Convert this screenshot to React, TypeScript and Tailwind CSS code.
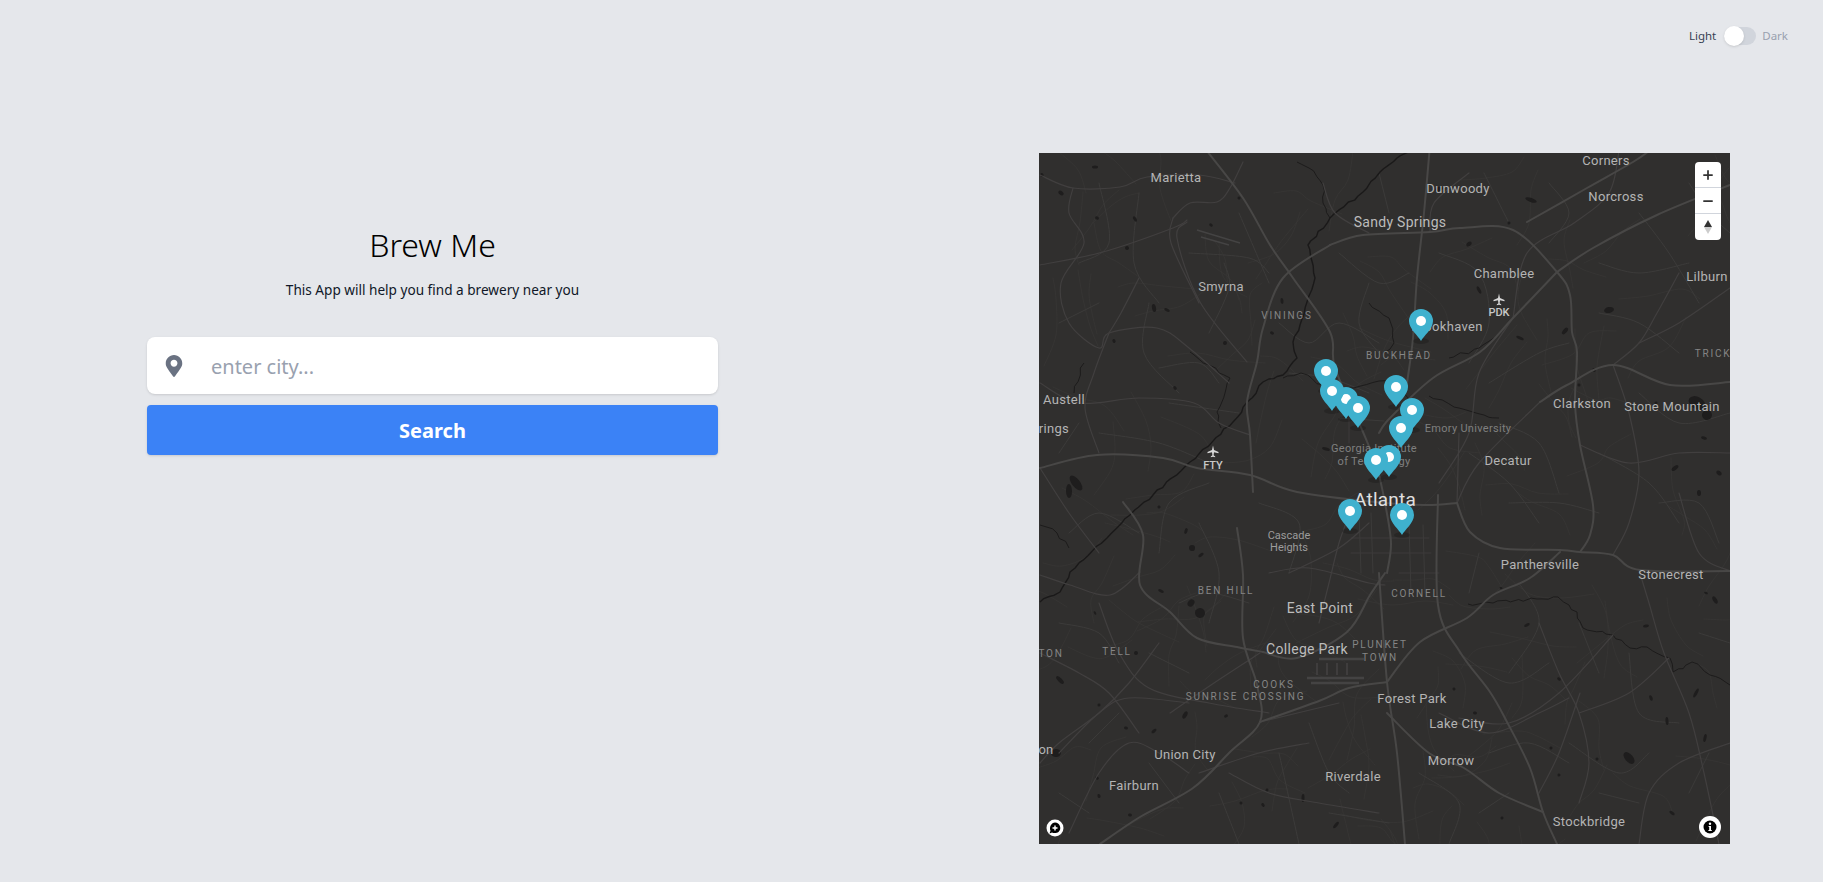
import { Minus, Plus } from "lucide-react";
import { FaMapMarkerAlt } from "react-icons/fa";

// map labels: [text, center x, center y, kind]
const labels: Array<[string, number, number, string]> = [
  ["Marietta", 137, 24, "city"],
  ["Sandy Springs", 361, 69, "big"],
  ["Smyrna", 182, 133, "city"],
  ["VININGS", 248, 163, "area"],
  ["Austell", 25, 246, "city"],
  ["rings", 15, 275, "city"],
  ["FTY", 174, 312, "air"],
  ["Corners", 567, 7, "city"],
  ["Dunwoody", 419, 35, "city"],
  ["Norcross", 577, 43, "city"],
  ["Chamblee", 465, 120, "city"],
  ["Lilburn", 668, 123, "city"],
  ["PDK", 460, 159, "air"],
  ["Brookhaven", 408, 173, "city"],
  ["BUCKHEAD", 360, 203, "area"],
  ["TRICK", 674, 201, "area"],
  ["Clarkston", 543, 250, "city"],
  ["Stone Mountain", 633, 253, "city"],
  ["Emory University", 429, 275, "poi"],
  ["Decatur", 469, 307, "city"],
  ["Georgia Institute", 335, 295, "poi"],
  ["of Technology", 335, 308, "poi"],
  ["Atlanta", 346, 346, "capital"],
  ["Cascade", 250, 382, "small"],
  ["Heights", 250, 394, "small"],
  ["Panthersville", 501, 411, "city"],
  ["Stonecrest", 632, 421, "city"],
  ["BEN HILL", 187, 438, "area"],
  ["CORNELL", 380, 441, "area"],
  ["East Point", 281, 455, "big"],
  ["College Park", 268, 496, "big"],
  ["PLUNKET", 341, 492, "area"],
  ["TOWN", 341, 505, "area"],
  ["TELL", 78, 499, "area"],
  ["TON", 12, 501, "area"],
  ["COOKS", 235, 532, "area"],
  ["SUNRISE", 173, 544, "area"],
  ["CROSSING", 235, 544, "area"],
  ["Forest Park", 373, 545, "city"],
  ["Lake City", 418, 570, "city"],
  ["Union City", 146, 601, "city"],
  ["on", 7, 596, "city"],
  ["Morrow", 412, 607, "city"],
  ["Riverdale", 314, 623, "city"],
  ["Fairburn", 95, 632, "city"],
  ["Stockbridge", 550, 668, "city"],
];

const labelClass: Record<string, string> = {
  city: "text-[13px] text-[#b4b4b4] tracking-[0.3px]",
  big: "text-[14px] text-[#bcbcbc] tracking-[0.3px]",
  capital: "text-[19px] text-[#e0e0e0] tracking-[0.2px]",
  area: "text-[10px] text-[#858585] tracking-[1.8px]",
  poi: "text-[11px] text-[#7f7f7f] tracking-[0.3px]",
  small: "text-[11px] text-[#9c9c9c]",
  air: "text-[11px] text-[#c8c8c8] font-medium",
};

// dot centres of the markers, back to front
const pins = [
  [382, 168],
  [287, 218],
  [307, 246],
  [293, 238],
  [319, 255],
  [357, 234],
  [373, 257],
  [362, 275],
  [350, 304],
  [337, 307],
  [311, 358],
  [363, 362],
];

const highways = [
  "M168 -2L204 45L231 92L254 125L291 179L296 215L324 279L338 315L346 350L352 390L348 420",
  "M291 92L244 125L224 175L218 209L208 249L211 282L214 339",
  "M1 315L58 302L124 305L158 315L211 322L258 339L346 350L388 352L418 350",
  "M418 350L431 379L461 395L521 397L541 399L574 402L601 417L691 418",
  "M291 92L324 82L391 79L421 75L474 77L518 119L531 142L533 179L538 199L536 250L541 292L554 352L551 382L541 399",
  "M518 119L474 165L441 199L394 225L351 265L340 280",
  "M518 119L554 95L618 62L691 32",
  "M488 69L548 35L594 9L610 -2",
  "M391 -8L385 60L378 125L374 185L368 230",
  "M501 249L528 232L574 212L631 232L691 229",
  "M348 529L381 489L428 465L454 442L491 425L521 399",
  "M399 342L399 452L421 499L451 539L468 569L491 615L504 659L518 691",
  "M198 375L204 422L204 485L218 532L221 569L191 599L154 635L101 664L61 691",
  "M340 420L348 529L358 600L366 691",
  "M224 499L258 505L308 479L331 442L346 420",
  "M348 529L310 535L280 548L221 569",
  "M84 349L104 382L101 432L131 459L158 485L198 494L224 499",
  "M504 659L460 640L425 615L390 600L348 560",
];

const mainRoads = [
  "M1 22L34 35L81 34L108 24L160 22L196 30",
  "M134 65L151 50L178 49L191 35L204 9",
  "M1 112L64 99L134 75L148 67",
  "M148 69L138 85L161 149L208 209",
  "M134 65L132 90L160 150",
  "M34 35L30 60L45 90L22 130L30 170L60 195L70 180L118 175L150 195L190 230",
  "M70 180L55 220L46 255L60 300",
  "M100 125L82 160L70 180",
  "M1 230L40 250L100 245L155 250L180 270L211 282",
  "M1 422L31 432L71 442L101 419",
  "M1 315L30 360L60 400",
  "M60 450L80 500L110 535L170 550L230 560",
  "M120 490L90 530L60 560L20 590L1 610",
  "M131 560L175 530L221 500",
  "M160 620L220 600L270 590",
  "M284 30L296 60L330 80",
  "M430 20L395 50L391 79",
  "M580 -2L570 40L535 70L488 100L474 165",
  "M640 120L618 160L600 190L574 212",
  "M691 135L640 170L600 190",
  "M474 165L440 220L430 280L400 330",
  "M501 249L440 310L418 350",
  "M574 212L590 260L600 320L590 370L574 402",
  "M691 300L640 300L590 310L541 292",
  "M600 417L610 450L625 500L650 560L665 620L680 691",
  "M574 482L520 540L470 570L420 565",
  "M640 340L660 400L691 418",
  "M540 560L590 540L630 505",
  "M500 470L520 520L540 560L550 610L540 650",
  "M541 540L520 600L500 640",
  "M418 350L420 280",
  "M600 691L610 640L640 610L691 590",
  "M400 560L450 580L500 560L530 545",
  "M280 470L290 430L300 390L311 360",
  "M250 420L300 395L330 370",
  "M230 420L270 415L330 430L346 432",
  "M30 680L60 620L90 590L120 600L150 620",
  "M190 620L230 640L280 650L340 660",
  "M221 569L300 550",
  "M1 500L40 520L70 540L100 580",
  "M20 600L60 560L90 545L150 550",
];

const minorRoads = [
  "M60 30L70 90L40 110",
  "M100 40L95 110L120 150",
  "M200 60L230 130",
  "M150 100L210 105L230 120",
  "M185 110L190 135L170 180",
  "M110 150L105 200L140 240",
  "M120 215L160 210L180 230",
  "M20 170L60 150",
  "M130 250L200 260",
  "M60 280L120 290L170 310",
  "M20 300L40 270",
  "M240 170L270 190L300 170L340 190",
  "M250 220L290 225L330 240",
  "M300 100L340 130L370 120",
  "M340 20L350 60",
  "M330 130L320 170L340 200",
  "M400 100L440 120L450 170L430 210",
  "M445 20L470 70",
  "M510 30L530 60L510 90",
  "M560 110L600 120L650 110",
  "M600 60L630 100L660 150",
  "M560 160L600 170L640 200",
  "M450 230L500 200L530 190",
  "M460 270L500 290L520 340",
  "M600 240L640 270L691 260",
  "M650 30L670 60L691 80",
  "M430 300L470 330L500 370",
  "M560 300L610 330L640 370",
  "M620 350L660 350L680 390",
  "M470 350L520 350L560 360",
  "M440 400L430 440",
  "M480 430L500 470L470 520",
  "M540 470L560 520",
  "M590 500L600 560L640 570",
  "M660 480L691 490",
  "M420 500L470 530L510 510",
  "M530 590L580 620L610 600",
  "M450 600L490 590L530 610",
  "M560 640L600 650",
  "M650 640L670 600",
  "M120 400L130 350L170 330",
  "M30 380L60 360L100 380",
  "M160 370L180 420L170 470",
  "M220 350L260 370L250 420",
  "M140 450L170 440L210 450",
  "M20 470L60 480L80 510",
  "M50 590L80 560",
  "M110 500L150 520",
  "M110 610L140 650",
  "M180 640L200 691",
  "M240 600L260 691",
  "M270 570L290 620L310 640",
  "M290 660L350 670",
  "M20 640L50 660",
  "M380 620L420 650L410 691",
  "M440 660L470 640",
];

// downtown street grid stays straight
const grid = "M320 360L322 420M332 360L334 420M312 385L390 385M312 400L392 400M370 370L372 440M384 372L386 440M360 420L400 420M300 265L345 268M310 250L310 290";

const river = "M1 449L21 439L31 419L68 385L91 362L114 342L151 309L194 269L224 229L244 222L258 205L254 189L261 172L268 149L276 125L269 92L291 65L324 39L341 19L358 5L372 -2";

const creeks = [
  "M151 199L170 212L191 225L186 240L178 259L182 275",
  "M258 9L270 15L284 32L284 50L291 65",
  "M244 225L262 220L285 232L310 235L340 228L352 225L372 248",
  "M390 243L420 255L445 262L460 265",
  "M330 150L350 165L355 190L345 200",
  "M410 205L440 195L455 185",
  "M429 451L454 450L498 446L519 444L530 452L538 459L544 475L574 482L591 495L608 494L631 505L634 519L653 509L671 522L691 532",
  "M1 372L18 380L30 395",
  "M45 210L35 240",
];

const ponds = [
  [56, 14, 3, 1.5], [22, 40, 3, 2], [3, 22, 2, 1.5], [58, 65, 2, 1.5], [96, 66, 3, 1.5], [88, 95, 2, 2],
  [172, 72, 2, 1.5], [115, 155, 4, 2], [128, 157, 3, 1.5], [75, 188, 2, 1.5], [186, 190, 2, 2], [136, 235, 2, 1.5],
  [243, 148, 3, 1.5], [233, 180, 2, 1.5], [320, 270, 3, 2], [287, 296, 4, 1.5], [37, 330, 9, 4], [30, 338, 7, 3],
  [200, 45, 1.5, 1.5], [400, 36, 2, 4], [492, 47, 6, 2], [430, 91, 2, 3], [470, 70, 1.5, 1.5], [526, 178, 2, 4],
  [570, 157, 3, 5], [481, 185, 4, 1.5], [440, 137, 4, 1.5], [540, 232, 1.5, 1.5], [555, 217, 2, 1.5], [617, 250, 1.5, 1.5],
  [658, 250, 9, 6], [668, 262, 5, 5], [665, 285, 3, 1.5], [636, 315, 2, 4], [660, 340, 3, 2], [680, 320, 3, 2],
  [120, 354, 1.5, 1.5], [147, 378, 1.5, 3], [162, 402, 1.5, 3], [153, 395, 3, 3], [152, 450, 3, 4], [161, 460, 5, 5],
  [122, 438, 3, 1.5], [56, 460, 2, 1], [97, 500, 2, 2], [21, 527, 5, 2], [60, 552, 1.5, 1.5], [146, 562, 2, 4],
  [187, 563, 1.5, 2], [87, 575, 2, 1.5], [115, 578, 1.5, 3], [17, 600, 4, 5], [58, 625, 2, 1.5], [60, 643, 2, 1.5],
  [91, 662, 2, 1.5], [224, 652, 2, 1.5], [264, 645, 1.5, 4], [297, 672, 1.5, 4], [202, 650, 1.5, 1.5], [228, 637, 1.5, 1.5],
  [488, 472, 1.5, 3], [462, 435, 1.5, 1], [520, 526, 2, 1.5], [607, 473, 1.5, 3], [657, 540, 1.5, 5], [612, 545, 3, 1.5],
  [666, 585, 1.5, 4], [590, 605, 7, 4], [628, 568, 4, 1.5], [633, 660, 3, 1.5], [415, 536, 1.5, 1.5], [436, 560, 2, 1.5],
  [512, 595, 1.5, 1.5], [520, 622, 1.5, 1.5], [558, 606, 1.5, 1.5], [463, 665, 1.5, 1.5], [667, 440, 2, 1], [676, 447, 4, 2],
];

function points(d: string) {
  return d
    .replace("M", "")
    .split("L")
    .map((p) => p.trim().split(" ").map(Number));
}

// polyline -> catmull-rom curve, so the roads bend instead of kinking
function smooth(d: string) {
  const p = points(d);
  let out = `M${p[0][0]} ${p[0][1]}`;
  for (let i = 0; i < p.length - 1; i++) {
    const a = p[i - 1] || p[i];
    const b = p[i];
    const c = p[i + 1];
    const e = p[i + 2] || c;
    out += `C${b[0] + (c[0] - a[0]) / 6} ${b[1] + (c[1] - a[1]) / 6} ${c[0] - (e[0] - b[0]) / 6} ${c[1] - (e[1] - b[1]) / 6} ${c[0]} ${c[1]}`;
  }
  return out;
}

function rng(seed: number) {
  let s = seed;
  return () => {
    s = (s * 16807) % 2147483647;
    return s / 2147483647;
  };
}

// creeks and rivers are jagged: cut each leg up and shake the points
function wiggle(d: string, seed: number, amount: number) {
  const r = rng(seed);
  const p = points(d);
  let out = `M${p[0][0]} ${p[0][1]}`;
  for (let i = 0; i < p.length - 1; i++) {
    const steps = Math.max(2, Math.round(Math.hypot(p[i + 1][0] - p[i][0], p[i + 1][1] - p[i][1]) / 6));
    for (let k = 1; k <= steps; k++) {
      const t = k / steps;
      const shake = k === steps ? 0 : amount;
      const x = p[i][0] + (p[i + 1][0] - p[i][0]) * t + (r() - 0.5) * shake;
      const y = p[i][1] + (p[i + 1][1] - p[i][1]) * t + (r() - 0.5) * shake;
      out += `L${x.toFixed(1)} ${y.toFixed(1)}`;
    }
  }
  return out;
}

// faint neighbourhood streets that fill the gaps
function backgroundStreets() {
  const r = rng(4242);
  const out: string[] = [];
  for (let i = 0; i < 170; i++) {
    let x = r() * 691;
    let y = r() * 691;
    let angle = r() * Math.PI * 2;
    let d = `M${x.toFixed(0)} ${y.toFixed(0)}`;
    for (let k = 0; k < 3; k++) {
      angle += (r() - 0.5) * 1.2;
      x += Math.cos(angle) * (14 + r() * 22);
      y += Math.sin(angle) * (14 + r() * 22);
      d += `L${x.toFixed(0)} ${y.toFixed(0)}`;
    }
    out.push(d);
  }
  return out;
}

const streets = backgroundStreets();

function MapDrawing() {
  return (
    <svg viewBox="0 0 691 691" className="block w-full h-full" fill="none">
      <g stroke="#373635" strokeWidth="0.8" strokeLinecap="round" strokeLinejoin="round">
        {streets.map((d, i) => (
          <path key={i} d={smooth(d)} />
        ))}
      </g>
      <g stroke="#3c3b3a" strokeWidth="1" strokeLinecap="round" strokeLinejoin="round">
        {minorRoads.map((d, i) => (
          <path key={i} d={smooth(d)} />
        ))}
        <path d={grid} />
      </g>
      <g fill="#1e1d1d">
        {ponds.map(([x, y, rx, ry], i) => (
          <ellipse key={i} cx={x} cy={y} rx={rx} ry={ry} transform={`rotate(${(i * 37) % 90} ${x} ${y})`} />
        ))}
      </g>
      <g stroke="#1a1919" strokeLinejoin="round">
        <path strokeWidth="1.4" d={wiggle(river, 77, 2.5)} />
        {creeks.map((d, i) => (
          <path key={i} d={wiggle(d, 100 + i, 3.5)} strokeWidth="0.9" />
        ))}
      </g>
      <g stroke="#413f3f" strokeWidth="1.2" strokeLinecap="round" strokeLinejoin="round">
        {mainRoads.map((d, i) => (
          <path key={i} d={smooth(d)} />
        ))}
      </g>
      <g stroke="#484746" strokeWidth="2" strokeLinecap="round" strokeLinejoin="round">
        {highways.map((d, i) => (
          <path key={i} d={smooth(d)} />
        ))}
      </g>
      {/* runways */}
      <g stroke="#444343" strokeWidth="2.5">
        <path d="M158 77L201 90M162 84L190 92" strokeWidth="1.5" />
        <path d="M280 506L325 506M268 525L325 525M272 530L320 530" />
        <path d="M278 510V522M288 510V522M298 510V522M308 510V522" strokeWidth="1.5" />
      </g>
      {/* airport planes */}
      <g fill="#d8d8d8">
        <path d="M174 292.5l1 4.5 4.5 2v1.2l-4.5-1-.4 3 1.6 1.2v.8l-2.2-.5-2.2.5v-.8l1.6-1.2-.4-3-4.5 1V299l4.5-2z" />
        <path d="M460 140.5l1 4.5 4.5 2v1.2l-4.5-1-.4 3 1.6 1.2v.8l-2.2-.5-2.2.5v-.8l1.6-1.2-.4-3-4.5 1V147l4.5-2z" />
      </g>
      {pins.map(([x, y], i) => (
        <ellipse key={i} cx={x} cy={y + 20} rx="8" ry="3" fill="#000" opacity="0.18" />
      ))}
      {/* logo, bottom left */}
      <circle cx="16" cy="675" r="8.5" fill="#fff" />
      <path d="M16 669.5a5.5 5.5 0 0 1 3.5 9.5c-2 1.5-5 1.3-6.5.5l-2.5 1 1-2.7c-1.6-3.6 1-8.3 4.5-8.3z" fill="#000" />
      <path d="M15.3 672.5h1.4v1.8h1.8v1.400h-1.800v1.800h-1.400v-1.800h-1.800v-1.400h1.800z" fill="#fff" />
      {/* attribution, bottom right */}
      <circle cx="671" cy="674" r="11" fill="#fff" />
      <circle cx="671" cy="674" r="6.5" fill="#000" />
      <circle cx="671" cy="670.8" r="1.2" fill="#fff" />
      <path d="M669.6 673h2.4v4h.8v1h-3.400v-1h.8v-3h-.6z" fill="#fff" />
    </svg>
  );
}

export default function App() {
  return (
    <div className="min-h-[882px] bg-[#e5e7eb] font-['Noto_Sans',sans-serif] overflow-hidden">
      {/* Theme toggle */}
      <div className="flex justify-end h-[63px] pt-[27px] pr-[35px]">
        <div className="flex items-center h-[18px]">
          <span className="text-[11.5px] text-gray-700 mr-[8px]">Light</span>
          <div className="relative w-8 h-[18px] rounded-full bg-gray-300">
            <div className="absolute left-0 -top-px w-5 h-5 rounded-full bg-white shadow"></div>
          </div>
          <span className="text-[11.5px] text-gray-400 ml-[6px]">Dark</span>
        </div>
      </div>

      <div className="flex items-start pt-[90px] pl-[147px]">
        {/* Search */}
        <div className="w-[571px] shrink-0 pt-[74px] flex flex-col items-center">
          <h1 className="text-[32px] leading-9 font-light text-black">Brew Me</h1>
          <p className="mt-[17px] text-[13.6px] leading-5 text-gray-900">This App will help you find a brewery near you</p>
          <div className="mt-[37px] w-full h-[57px] flex items-center bg-white rounded-lg shadow">
            <FaMapMarkerAlt className="ml-[16px] text-[22px] text-gray-500 shrink-0" />
            <input
              className="ml-[26px] pt-[2px] flex-1 text-[20px] text-gray-700 placeholder:text-gray-400 outline-none"
              placeholder="enter city..."
            />
          </div>
          <button className="mt-[11px] w-full h-[50px] pt-[1px] rounded bg-[#3b82f6] text-white text-xl font-bold shadow">
            Search
          </button>
        </div>

        {/* Map */}
        <div className="relative shrink-0 ml-[321px] w-[691px] h-[691px] bg-[#302f2e] overflow-hidden font-['Roboto',sans-serif]">
          <MapDrawing />
          {labels.map(([text, x, y, kind]) => (
            <span
              key={text}
              className={`absolute whitespace-nowrap leading-none -translate-x-1/2 -translate-y-1/2 ${labelClass[kind]}`}
              style={{ left: x, top: y }}
            >
              {text}
            </span>
          ))}
          {/* keep the markers above the labels */}
          <svg viewBox="0 0 691 691" className="absolute inset-0 w-full h-full pointer-events-none">
            {pins.map(([x, y], i) => (
              <g key={i} transform={`translate(${x} ${y})`}>
                <path d="M0 20C-2.5 15 -12 8 -12 0A12 12 0 0 1 12 0C12 8 2.5 15 0 20Z" fill="#3fb1ce" />
                <circle r="5" fill="#fff" />
              </g>
            ))}
          </svg>
          {/* Zoom controls */}
          <div className="absolute top-[9px] right-[9px] w-[26px] flex flex-col bg-white rounded text-[#333] divide-y divide-gray-300">
            <button className="h-[26px] flex items-center justify-center">
              <Plus size={14} strokeWidth={3} />
            </button>
            <button className="h-[26px] flex items-center justify-center">
              <Minus size={14} strokeWidth={3} />
            </button>
            <button className="h-[26px] flex items-center justify-center">
              <svg width="10" height="16" viewBox="0 0 10 16">
                <path d="M5 1L9 8H1z" fill="#333" />
                <path d="M5 15L9 8H1z" fill="#ccc" />
              </svg>
            </button>
          </div>
        </div>
      </div>
    </div>
  );
}
